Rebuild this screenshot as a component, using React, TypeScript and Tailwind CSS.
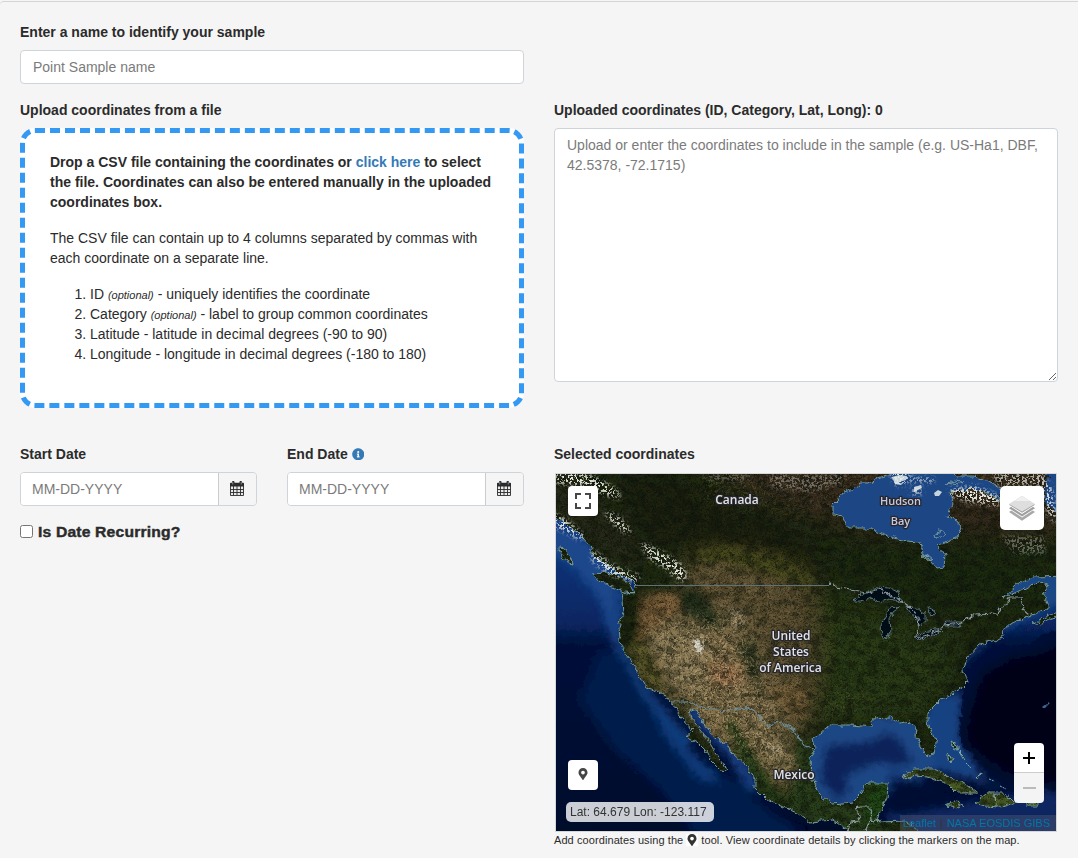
import React from "react";
import { FaInfoCircle, FaMapMarkerAlt } from "react-icons/fa";

const MAINLAND =
  "M545,508 L556,517 L562,520 L570,528 L577,532 L583,538 L590,546 L593,555 L603,562 L612,568 L617,573 L630,578 L637,585 L634,592 L626,594 L621,592 L622,600 L623,613 L619,627 L620,640 L621,647 L630,660 L638,673 L647,688 L660,692 L668,698 L675,708 L682,720 L693,730 L687,737 L697,742 L705,750 L710,760 L720,770 L727,771 L723,762 L715,752 L708,740 L700,730 L692,718 L690,709 L697,712 L703,723 L713,735 L727,745 L732,753 L747,767 L755,778 L755,788 L767,800 L783,807 L797,813 L810,822 L833,820 L848,831 L850,845 L915,845 L917,829 L907,821 L878,822 L880,813 L887,798 L888,783 L867,783 L862,793 L853,802 L833,804 L822,797 L812,780 L811,757 L815,747 L813,738 L830,725 L850,725 L863,726 L872,727 L871,719 L890,718 L900,723 L910,721 L917,730 L916,737 L925,753 L930,756 L934,755 L936,743 L928,723 L928,712 L940,700 L963,687 L968,682 L963,670 L965,660 L980,644 L1003,638 L1002,630 L1017,620 L1037,613 L1048,609 L1048,605 L1043,593 L1048,586 L1040,583 L1030,585 L1017,592 L1003,598 L1017,585 L1033,577 L1070,576 L1070,460 L545,460 Z";

const HUDSON =
  "M893,465 L890,475 L877,478 L870,483 L860,483 L852,490 L843,493 L838,500 L833,505 L833,515 L843,517 L848,528 L870,528 L878,532 L890,537 L905,541 L920,542 L922,555 L930,560 L937,568 L944,567 L945,555 L938,545 L948,542 L957,537 L961,528 L957,520 L947,516 L953,505 L950,492 L967,489 L983,491 L1000,500 L1001,488 L987,480 L973,476 L955,476 L945,465 Z";

const ISLANDS = [
  "M592,573 L607,572 L620,577 L629,583 L634,593 L625,592 L612,587 L600,582 Z",
  "M558,548 L566,549 L570,556 L573,563 L568,562 L562,557 Z",
  "M902,777 L915,769 L933,769 L950,777 L963,783 L978,793 L957,793 L947,783 L927,777 L915,776 L908,778 Z",
  "M947,805 L953,802 L963,805 L957,808 Z",
  "M975,803 L980,799 L987,793 L1003,793 L1010,798 L1015,803 L1006,806 L1000,807 L985,806 Z",
  "M1026,803 L1038,803 L1038,806 L1027,806 Z",
  "M1033,623 L1042,619 L1060,611 L1060,615 L1047,620 L1039,625 Z",
  "M947,754 L953,758 L951,763 L947,758 Z",
  "M952,742 L957,745 L957,751 Z",
  "M959,752 L964,757 L964,760 Z",
  "M977,776 L981,773 L979,779 Z",
];

const LAKES = [
  "M852,601 L863,594 L878,587 L888,588 L899,593 L902,602 L890,599 L880,602 L870,598 L860,601 Z",
  "M900,607 L890,608 L884,618 L881,627 L882,635 L887,637 L891,632 L890,620 L893,612 Z",
  "M906,606 L917,608 L925,613 L925,621 L920,627 L917,618 L909,611 Z",
  "M927,607 L934,611 L936,615 L930,614 Z",
  "M915,637 L928,631 L943,629 L939,633 L925,638 L917,640 Z",
  "M943,626 L947,622 L963,622 L958,626 L950,626 Z",
];

function BaseMap() {
  return (
    <svg className="absolute inset-0 block" width="500" height="357" viewBox="556 474 500 357">
      <defs>
        <filter id="coast" x="545" y="460" width="525" height="385" filterUnits="userSpaceOnUse">
          <feTurbulence type="fractalNoise" baseFrequency="0.16" numOctaves="3" seed="8" result="n" />
          <feDisplacementMap in="SourceGraphic" in2="n" scale="7" xChannelSelector="R" yChannelSelector="G" />
        </filter>
        <filter id="soft" x="500" y="420" width="620" height="470" filterUnits="userSpaceOnUse">
          <feGaussianBlur stdDeviation="11" />
        </filter>
        <filter id="soft2" x="500" y="420" width="620" height="470" filterUnits="userSpaceOnUse">
          <feGaussianBlur stdDeviation="4" />
        </filter>
        <filter id="shade" x="545" y="460" width="525" height="385" filterUnits="userSpaceOnUse" colorInterpolationFilters="sRGB">
          <feTurbulence type="fractalNoise" baseFrequency="0.09 0.13" numOctaves="6" seed="3" />
          <feColorMatrix values="0 0 0 0 0.05  0 0 0 0 0.07  0 0 0 0 0.03  3.2 0 0 0 -1.3" />
        </filter>
        <filter id="grain" x="545" y="460" width="525" height="385" filterUnits="userSpaceOnUse" colorInterpolationFilters="sRGB">
          <feTurbulence type="fractalNoise" baseFrequency="0.55" numOctaves="3" seed="12" />
          <feColorMatrix values="0 0 0 0 0.02  0 0 0 0 0.03  0 0 0 0 0.01  0 0 5 0 -2.4" />
        </filter>
        <filter id="light" x="545" y="460" width="525" height="385" filterUnits="userSpaceOnUse" colorInterpolationFilters="sRGB">
          <feGaussianBlur in="SourceGraphic" stdDeviation="9" result="b" />
          <feTurbulence type="fractalNoise" baseFrequency="0.4" numOctaves="4" seed="21" />
          <feColorMatrix values="0 0 0 0 0.76  0 0 0 0 0.68  0 0 0 0 0.5  0 5 0 0 -2.5" result="t" />
          <feComposite in="t" in2="b" operator="in" />
        </filter>
        <filter id="snow" x="545" y="460" width="525" height="385" filterUnits="userSpaceOnUse" colorInterpolationFilters="sRGB">
          <feGaussianBlur in="SourceGraphic" stdDeviation="2.5" result="b" />
          <feTurbulence type="fractalNoise" baseFrequency="0.4" numOctaves="3" seed="5" />
          <feColorMatrix values="0 0 0 0 0.9  0 0 0 0 0.9  0 0 0 0 0.87  0 0 14 0 -7" result="t" />
          <feComposite in="t" in2="b" operator="in" />
        </filter>
        <linearGradient id="sea" x1="0" y1="0" x2="0" y2="1">
          <stop offset="0" stopColor="#174385" />
          <stop offset="0.3" stopColor="#0a2e70" />
          <stop offset="0.42" stopColor="#082762" />
          <stop offset="0.48" stopColor="#04113a" />
          <stop offset="0.75" stopColor="#030d31" />
          <stop offset="1" stopColor="#020a2b" />
        </linearGradient>
        <clipPath id="landclip">
          <path d={MAINLAND} />
          {ISLANDS.map((d) => (
            <path key={d} d={d} />
          ))}
        </clipPath>
      </defs>

      <g filter="url(#coast)">
        <rect x="545" y="460" width="525" height="385" fill="url(#sea)" />
        <g filter="url(#soft2)">
          <path d="M545,510 L600,552 L622,590 L619,640 L611,640 L600,600 L570,565 L545,552 Z" fill="#1a478b" />
          <path d="M617,585 L618,645 L645,692 L690,745" fill="none" stroke="#12407f" strokeWidth="9" />
          <path d="M600,650 L622,655 L645,700 L690,750 L730,778 L755,790 L780,812 L805,840 L700,840 L660,790 L615,750 L580,700 Z" fill="#051a4c" />
          <path d="M648,698 L690,750 L722,782 L700,780 L665,735 Z" fill="#103a7a" />
          <path d="M690,709 L730,750 L756,790" fill="none" stroke="#164386" strokeWidth="11" />
          <path d="M748,790 L775,814 L812,832" fill="none" stroke="#020b2a" strokeWidth="5" />
          <path d="M800,715 H935 L950,765 L890,790 L850,810 L805,800 Z" fill="#1b4685" />
          <path d="M826,745 L868,742 L888,732 L901,742 L914,764 L895,766 L880,762 L845,776 L850,790 L838,800 L820,780 Z" fill="#0c2458" />
          <path d="M890,772 L915,780 L960,800 L1060,790 L1060,845 L885,845 Z" fill="#0b2860" />
          <path d="M890,783 L910,780 L950,795 L985,800 L900,816 L888,812 Z" fill="#040f30" />
          <path d="M925,700 L990,636 L1070,600 L1070,540 L920,640 Z" fill="#1b4685" />
          <path d="M925,700 L962,690 L960,740 L985,780 L1010,790 L935,770 Z" fill="#194382" />
        </g>
        <path d="M961,711 L964,690 L984,663 L1005,650 L1030,645 L1042,634 L1070,627 L1070,780 L1010,780 L976,758 L960,742 Z" fill="#030f35" />
        <path d="M970,712 L984,674 L1010,660 L1045,652 L1070,640 L1070,785 L1015,777 L982,757 L966,740 Z" fill="#010619" filter="url(#soft2)" />
        <path d="M1042,707 l4,-3 2,1 -4,4 Z" fill="#3c6690" />

        <g clipPath="url(#landclip)">
          <rect x="545" y="460" width="525" height="385" fill="#202b12" />
          <g filter="url(#soft)">
            <path d="M700,450 H1070 V535 H960 L850,530 L800,515 L740,490 Z" fill="#352c1d" />
            <path d="M610,470 L690,480 L820,545 L820,570 L740,555 L640,540 Z" fill="#1a2411" />
            <path d="M560,470 L650,560 L620,560 L550,500 Z" fill="#2a291b" />
            <path d="M690,555 L760,557 L812,580 L820,650 L808,735 L780,720 L700,680 L680,590 Z" fill="#5b5030" />
            <path d="M815,590 L960,640 L920,720 L820,725 Z" fill="#2c3a15" />
            <path d="M820,550 H1060 V600 L960,620 L850,590 Z" fill="#1c290f" />
            <path d="M650,600 L740,610 L780,690 L790,725 L800,790 L770,790 L700,720 L640,680 Z" fill="#7b6a47" />
            <path d="M815,660 L960,640 L930,720 L820,720 Z" fill="#2a3b14" />
          </g>
          <g filter="url(#soft2)">
            <path d="M690,550 L725,545 L780,556 L812,576 L812,590 L765,572 L700,562 Z" fill="#46481f" />
            <path d="M690,575 L720,560 L750,572 L760,590 L700,592 Z" fill="#605234" />
            <path d="M645,595 L675,592 L680,610 L665,620 L648,635 L637,650 L640,615 Z" fill="#82633d" />
            <path d="M707,667 L720,659 L740,668 L742,680 L725,690 L713,682 Z" fill="#99704c" />
            <path d="M650,635 L695,625 L710,645 L705,695 L670,685 Z" fill="#8b7a54" />
            <path d="M621,592 L642,592 L640,640 L625,650 Z" fill="#1c260f" />
            <path d="M630,646 L640,642 L666,680 L662,688 L648,686 Z" fill="#6b6530" />
            <path d="M636,646 L664,680 L661,686 L654,680 Z" fill="#2c3318" />
            <path d="M675,590 L700,588 L716,612 L722,628 L706,626 L680,612 Z" fill="#28301a" />
            <path d="M738,645 L754,638 L760,658 L758,690 L748,672 Z" fill="#2c321c" />
            <path d="M765,690 L810,680 L803,722 L790,712 Z" fill="#77603b" />
            <path d="M718,719 L734,722 L775,790 L800,815 L765,798 L742,762 Z" fill="#243d13" />
            <path d="M690,715 L712,706 L728,735 L735,750 Z" fill="#8c7650" />
            <path d="M740,710 L765,725 L790,750 L800,780 L775,775 Z" fill="#84734e" />
            <path d="M796,740 L813,745 L811,785 L850,810 L890,785 V840 H840 L790,810 Z" fill="#2b411a" />
            <path d="M868,780 h22 v42 h-25 Z" fill="#214916" />
            <path d="M900,770 L1040,790 V810 H900 Z" fill="#4a5b27" />
          </g>
          <rect x="545" y="460" width="525" height="385" filter="url(#shade)" opacity="0.5" />
          <rect x="545" y="460" width="525" height="385" filter="url(#grain)" opacity="0.4" />
          <g filter="url(#light)" fill="#fff" opacity="0.55">
            <path d="M640,620 L735,620 L770,700 L795,790 L770,770 L690,710 Z" />
            <path d="M820,690 L860,680 L870,700 L830,725 Z" opacity="0.3" />
            <path d="M690,560 L800,580 L800,700 L700,600 Z" opacity="0.3" />
            <path d="M700,465 H1056 V510 H700 Z" opacity="0.3" />
          </g>
        </g>

        <path d={HUDSON} fill="#1b4684" />
        <path d="M1038,465 L1048,477 L1045,490 L1048,505 L1060,517 L1070,520 V465 Z" fill="#1b4684" />
        <g fill="none" stroke="#82a5a2" strokeWidth="0.9" strokeLinejoin="round">
          <path d={MAINLAND} />
          <path d={HUDSON} />
          {ISLANDS.map((d) => (
            <path key={d} d={d} />
          ))}
          <path d="M935,534 l6,-4 4,3 -4,5 -5,0 Z M921,557 l6,-2 5,4 -3,2 Z M947,483 l8,-2 8,1 -5,3 Z" />
        </g>
        {LAKES.map((d) => (
          <path key={d} d={d} fill="#020716" stroke="#6f9090" strokeWidth="0.8" />
        ))}
        <g fill="none" stroke="#8b9b9e" strokeWidth="1.2">
          <path d="M829,585 L830,583 L836,587 L850,590 L867,593 L878,589 L890,595 L900,600 L910,607 L919,617 L918,628 L915,638 L928,635 L940,630 L944,625 L963,623 L972,614 L998,613 L1003,608 L1010,597 L1021,597 L1023,609 L1029,614" />
          <path d="M672,702 L688,702 L710,710 L735,711 L738,708 L750,709 L758,715 L768,727 L773,723 L783,722 L795,732 L805,747 L813,749" stroke="#6b8f9c" />
          <path d="M848,831 L850,822 L860,821 L858,812 L855,808 L860,807 H870 L871,820 L879,822 M871,820 L865,831 M995,793 L996,806" />
        </g>
      </g>

      <path d="M634,585.5 H829" stroke="#5f7376" strokeWidth="1.2" />

      <g filter="url(#snow)" fill="#fff">
        <path d="M556,472 h25 l20,8 16,10 4,9 -15,-4 -20,-8 -30,-4 Z" />
        <path d="M604,511 l14,5 14,16 -5,2 -16,-12 Z" />
        <path d="M553,513 l14,7 17,16 -4,4 -14,-8 -13,-6 Z" />
        <path d="M640,542 l22,10 20,13 6,12 -8,5 -14,-14 -17,-10 Z" />
        <path d="M592,550 l22,16 26,10 -3,6 -26,-7 -19,-14 Z" />
        <path d="M888,470 h22 l-3,13 -10,3 Z" />
        <path d="M908,478 h26 v4 h-24 Z M912,489 h10 v5 h-12 Z" />
        <path d="M950,489 l26,-3 24,11 -2,9 -27,-4 -19,-6 Z" />
        <path d="M950,489 l26,-3 14,7 -2,7 -17,-2 -17,-4 Z" />
        <path d="M1040,474 l12,14 5,35 -8,-6 Z" />
        <path d="M990,472 h55 v14 h-45 Z" opacity="0.7" />
        <path d="M770,474 h80 l-10,10 -30,8 -40,-5 Z" opacity="0.35" />
        <path d="M700,474 h50 v7 h-40 Z" opacity="0.3" />
        <path d="M1000,536 h45 v18 h-30 Z" opacity="0.35" />
        <path d="M692,638 l10,2 2,14 -10,-2 Z" />
        <path d="M728,607 l18,4 -4,18 -10,-2 Z" opacity="0.3" />
        <path d="M765,740 l18,8 -3,9 -12,-8 Z" opacity="0.4" />
      </g>
      <path d="M695,640 l5,2 2,8 -5,2 Z" fill="#d6d2c8" opacity="0.7" />
      <g fill="#e6edea">
        <path d="M892,477 l7,-2 8,1 -1,4 -7,2 2,3 -6,-1 Z M914,487 l7,-2 1,3 -8,4 Z M934,493 l4,-3 4,2 -3,4 -4,0 Z" opacity="0.85" />
      </g>
      <g fill="none" stroke="#77b7ba" strokeWidth="1">
        <path d="M948,755 l3,3 0,5 M953,743 l4,4 0,4 M959,752 l4,4 M966,763 l5,5 M976,778 l4,-4 M989,779 l5,2 M1000,786 l6,3" strokeDasharray="2 1" />
      </g>

      <g
        fill="#e2e2e8"
        stroke="#26272b"
        strokeWidth="2.6"
        strokeLinejoin="round"
        textAnchor="middle"
        className="font-['Open_Sans','Noto_Sans',sans-serif] text-[12px] font-semibold [paint-order:stroke]"
      >
        <text x="737" y="504">Canada</text>
        <text x="791" y="640">United</text>
        <text x="791" y="656">States</text>
        <text x="790.5" y="672">of America</text>
        <text x="794" y="779">Mexico</text>
        <g fill="#c8c7e0" fontSize="11">
          <text x="900.5" y="505">Hudson</text>
          <text x="900.5" y="525">Bay</text>
        </g>
      </g>
    </svg>
  );
}

function CalendarIcon() {
  return (
    <svg width="14" height="15" viewBox="0 0 14 15" className="-mt-px block">
      <rect x="0.500" y="5" width="13" height="9.500" fill="#e9e9e9" />
      <path
        d="M0 2.500a.8.8 0 0 1 .8-.8H2V1a1 1 0 0 1 1-1h.500a1 1 0 0 1 1 1v.7h5V1a1 1 0 0 1 1-1h.500a1 1 0 0 1 1 1v.7h1.200a.8.8 0 0 1 .8.8V5.500H0Z"
        fill="#2b2b2b"
      />
      <path d="M2.750 1v2.500M11.250 1v2.500" stroke="#8fa7bd" strokeWidth="0.800" />
      <path d="M.5 5v9.500h13V5M.5 8.500h13M.5 11.500h13M3.500 5v9M7 5v9M10.500 5v9" fill="none" stroke="#2b2b2b" strokeWidth="0.900" />
    </svg>
  );
}

function DateField({ label, info }: { label: string; info?: boolean }) {
  return (
    <div className="w-[237px]">
      <label className="flex h-5 items-center gap-1 font-bold">
        {label}
        {info && <FaInfoCircle size={12.5} className="text-[#337ab7]" />}
      </label>
      <div className="mt-2 flex h-[34px] overflow-hidden rounded border border-[#ced4da]">
        <input
          className="w-[197px] bg-white px-[11px] placeholder:text-[#7b7b7b] placeholder:opacity-100"
          placeholder="MM-DD-YYYY"
        />
        <span className="flex flex-1 items-center justify-center border-l border-[#ccc] bg-[#f5f5f5] pr-0.5">
          <CalendarIcon />
        </span>
      </div>
    </div>
  );
}

function MapPanel() {
  return (
    <div className="relative ml-px mt-[9px] h-[359px] w-[502px] overflow-hidden border border-[#d6d8d8]">
      <BaseMap />
      <button className="absolute left-3 top-3 flex size-[30px] items-center justify-center rounded-sm bg-white">
        <svg width="16" height="16" viewBox="0 0 16 16" fill="none" stroke="#464646" strokeWidth="2">
          <path d="M1 6V1h5M10 1h5v5M15 10v5h-5M6 15H1v-5" />
        </svg>
      </button>
      <button className="absolute right-3 top-3 flex size-11 items-center justify-center rounded-[5px] bg-white">
        <svg width="26" height="26" viewBox="0 0 26 26" className="mt-0.5">
          <path d="M0 16 13 24.800 26 16 23 14H3Z" fill="#a8a8a8" />
          <path d="M0 13 13 21.500 26 13 22.500 10.500H3.500Z" fill="#fff" />
          <path d="M0 12.200 13 20.600 26 12.200 23 10H3Z" fill="#a0a0a0" />
          <path d="M0 9.400 13 18 26 9.400 13 1Z" fill="#fff" />
          <path d="M0 8.700 13 16.800 26 8.700 13 0Z" fill="#a0a0a0" />
          <path d="M0 8 13 15.600 26 8 13 0Z" fill="#dedede" />
          <path d="M5 5 13 0 21 5Z" fill="#f0f0f0" />
        </svg>
      </button>
      <button className="absolute left-3 top-[286px] flex size-[30px] items-center justify-center rounded-sm bg-white">
        <FaMapMarkerAlt size={12} className="-mt-0.5 text-[#464646]" />
      </button>
      <div className="absolute left-[10px] top-[328px] flex h-5 w-[148px] items-center whitespace-nowrap rounded-[5px] bg-white/80 pl-1 text-[12px] text-[#333]">
        Lat: 64.679 Lon: -123.117
      </div>
      <div className="absolute bottom-0 right-0 flex h-4 w-[156px] items-center justify-end whitespace-nowrap bg-[#667]/35 pr-[6px] text-[11px] text-[#0078a8]">
        <span>Leaflet</span>
        <span className="px-1 text-[#333]">|</span>
        <span>NASA EOSDIS GIBS</span>
      </div>
      <div className="absolute right-3 top-[269px] flex h-[60px] w-[30px] flex-col overflow-hidden rounded-sm">
        <button className="flex h-[30px] items-center justify-center border-b border-[#ccc] bg-white">
          <svg width="12" height="12" viewBox="0 0 12 12" stroke="#000" strokeWidth="2" className="-ml-px">
            <path d="M0 6h12M6 0v12" />
          </svg>
        </button>
        <button className="flex h-[30px] items-center justify-center bg-[#f4f4f4]">
          <svg width="13" height="2" viewBox="0 0 13 2">
            <path d="M0 1h13" stroke="#bbb" strokeWidth="2" />
          </svg>
        </button>
      </div>
    </div>
  );
}

export default function App() {
  return (
    <div className="h-[858px] w-[1078px] overflow-hidden bg-[#f5f5f5] pt-px font-['Liberation_Sans',Arial,sans-serif] text-[14px] leading-5 text-[#2b2b2b]">
      <div className="h-full rounded-tl border-t border-[#d3d6d8] px-5 pt-5">
        <label className="block h-5 font-bold">Enter a name to identify your sample</label>
        <input
          className="mt-2 block h-[34px] w-[504px] rounded border border-[#ced4da] bg-white px-3 placeholder:text-[#7b7b7b] placeholder:opacity-100"
          placeholder="Point Sample name"
        />

        <div className="mt-4 flex h-[344px] gap-[30px]">
          <div className="w-[504px]">
            <label className="block h-5 font-bold">Upload coordinates from a file</label>
            <div className="mt-2 h-[280px] rounded-[15px] border-[5px] border-dashed border-[#3399f3] bg-white px-[25px] pt-[19px]">
              <p className="font-bold">
                Drop a CSV file containing the coordinates or <a className="text-[#337ab7]">click here</a> to select
                <br />
                the file. Coordinates can also be entered manually in the uploaded
                <br />
                coordinates box.
              </p>
              <p className="mt-4">
                The CSV file can contain up to 4 columns separated by commas with
                <br />
                each coordinate on a separate line.
              </p>
              <ol className="mt-4 list-decimal pl-10">
                <li className="h-5">
                  ID <em className="text-[11px] leading-none">(optional)</em> - uniquely identifies the coordinate
                </li>
                <li className="h-5">
                  Category <em className="text-[11px] leading-none">(optional)</em> - label to group common coordinates
                </li>
                <li className="h-5">Latitude - latitude in decimal degrees (-90 to 90)</li>
                <li className="h-5">Longitude - longitude in decimal degrees (-180 to 180)</li>
              </ol>
            </div>
          </div>
          <div className="w-[504px]">
            <label className="block h-5 font-bold">Uploaded coordinates (ID, Category, Lat, Long): 0</label>
            <textarea
              className="mt-2 block h-[254px] w-full resize rounded border border-[#ced4da] bg-white px-3 py-1.5 placeholder:text-[#7b7b7b] placeholder:opacity-100"
              placeholder="Upload or enter the coordinates to include in the sample (e.g. US-Ha1, DBF, 42.5378, -72.1715)"
            />
          </div>
        </div>

        <div className="flex gap-[30px]">
          <div className="w-[504px]">
            <div className="flex gap-[30px]">
              <DateField label="Start Date" />
              <DateField label="End Date" info />
            </div>
            <label className="mt-4 flex h-5 items-center gap-[5px]">
              <input type="checkbox" className="-mt-0.5 size-[13px]" />
              <span className="inline-block origin-left scale-x-[1.12] text-[14px] font-bold tracking-[0.15px] [-webkit-text-stroke:0.4px_#2b2b2b]">
                Is Date Recurring?
              </span>
            </label>
          </div>
          <div className="w-[504px]">
            <label className="block h-5 font-bold">Selected coordinates</label>
            <MapPanel />
            <p className="flex h-4 items-center whitespace-nowrap text-[11px] tracking-[0.085px]">
              Add coordinates using the
              <span className="ml-[3px] flex size-3 items-center justify-center bg-white">
                <FaMapMarkerAlt size={12} className="text-[#333]" />
              </span>
              <span className="ml-[3px]">tool. View coordinate details by clicking the markers on the map.</span>
            </p>
          </div>
        </div>
      </div>
    </div>
  );
}
